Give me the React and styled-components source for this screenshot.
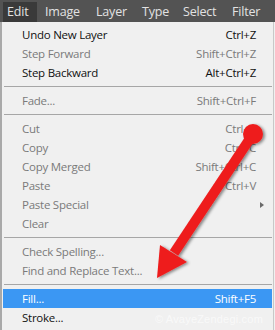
import React from "react";
import styled, { createGlobalStyle } from "styled-components";

const Global = createGlobalStyle`
  html, body { margin: 0; padding: 0; }
  body { width: 275px; height: 330px; overflow: hidden; background: #f0f0f0; font-family: "Open Sans", "Noto Sans", sans-serif; }
`;

const Screen = styled.div`
  position: relative;
  width: 275px;
  height: 330px;
  overflow: hidden;
  display: flex;
  flex-direction: column;
`;

const MenuBar = styled.div`
  height: 22px;
  background: #535353;
  display: flex;
  align-items: stretch;
  padding: 2px 0 0 3px;
  box-sizing: border-box;
`;

const MenuTitle = styled.div`
  display: flex;
  align-items: center;
  flex: none;
  width: ${(p) => p.$w}px;
  box-sizing: border-box;
  padding-left: 4px;
  margin-right: ${(p) => p.$mr || 0}px;
  background: ${(p) => (p.$active ? "#3a3a3a" : "transparent")};
  color: #e2e2e2;
  font-size: 12.5px;
  letter-spacing: -0.2px;
  line-height: 20px;
  white-space: nowrap;
`;

const Dropdown = styled.div`
  flex: 1;
  background: #f0f0f0;
  border-left: 2px solid #a9a9a9;
  border-right: 1px solid #c8c8c8;
  margin-right: 1px;
  padding-top: 3px;
  display: flex;
  flex-direction: column;
`;

const Item = styled.div`
  height: 19px;
  display: flex;
  align-items: center;
  padding: 0 16px 0 19px;
  margin: 0 1px;
  font-size: 11.5px;
  letter-spacing: -0.25px;
  color: ${(p) => (p.$selected ? "#ffffff" : p.$disabled ? "#7a7a7a" : "#111111")};
  background: ${(p) => (p.$selected ? "#3b97f3" : "transparent")};
`;

const Label = styled.span`
  flex: 1;
  white-space: nowrap;
`;

const Shortcut = styled.span`
  white-space: nowrap;
`;

const SubArrow = styled.span`
  width: 0;
  height: 0;
  border-top: 3.5px solid transparent;
  border-bottom: 3.5px solid transparent;
  border-left: 4px solid #6a6a6a;
  margin-right: -8px;
`;

const Separator = styled.div`
  height: 9px;
  display: flex;
  align-items: center;
  padding: 0 1px 0 2px;
  &::after {
    content: "";
    flex: 1;
    height: 1px;
    background: #a6a6a6;
  }
`;

const Overlay = styled.svg`
  position: absolute;
  left: 0;
  top: 0;
  pointer-events: none;
`;

const Watermark = styled.div`
  position: absolute;
  right: 12px;
  bottom: 5px;
  font-family: "Liberation Sans", sans-serif;
  font-size: 11px;
  color: rgba(255, 255, 255, 0.6);
  letter-spacing: 0.2px;
`;

const titles = [
  { t: "Edit", w: 34, mr: 4, active: true },
  { t: "Image", w: 51 },
  { t: "Layer", w: 46 },
  { t: "Type", w: 41 },
  { t: "Select", w: 49 },
  { t: "Filter", w: 44 },
];

const groups = [
  [
    { label: "Undo New Layer", key: "Ctrl+Z" },
    { label: "Step Forward", key: "Shift+Ctrl+Z", disabled: true },
    { label: "Step Backward", key: "Alt+Ctrl+Z" },
  ],
  [{ label: "Fade...", key: "Shift+Ctrl+F", disabled: true }],
  [
    { label: "Cut", key: "Ctrl+X", disabled: true },
    { label: "Copy", key: "Ctrl+C", disabled: true },
    { label: "Copy Merged", key: "Shift+Ctrl+C", disabled: true },
    { label: "Paste", key: "Ctrl+V", disabled: true },
    { label: "Paste Special", sub: true, disabled: true },
    { label: "Clear", disabled: true },
  ],
  [
    { label: "Check Spelling...", disabled: true },
    { label: "Find and Replace Text...", disabled: true },
  ],
  [
    { label: "Fill...", key: "Shift+F5", selected: true },
    { label: "Stroke..." },
  ],
];

export default function App() {
  return (
    <>
      <Global />
      <Screen>
        <MenuBar>
          {titles.map((t) => (
            <MenuTitle key={t.t} $w={t.w} $mr={t.mr} $active={t.active}>
              {t.t}
            </MenuTitle>
          ))}
        </MenuBar>
        <Dropdown>
          {groups.map((g, gi) => (
            <React.Fragment key={gi}>
              {gi > 0 && <Separator />}
              {g.map((it) => (
                <Item key={it.label} $disabled={it.disabled} $selected={it.selected}>
                  <Label>{it.label}</Label>
                  {it.key && <Shortcut>{it.key}</Shortcut>}
                  {it.sub && <SubArrow />}
                </Item>
              ))}
            </React.Fragment>
          ))}
        </Dropdown>
        <Overlay width="275" height="330" viewBox="0 0 275 330">
          <defs>
            <filter id="sh" x="-20%" y="-20%" width="140%" height="140%">
              <feDropShadow dx="2" dy="1" stdDeviation="1.5" floodColor="#000" floodOpacity="0.45" />
            </filter>
          </defs>
          <g filter="url(#sh)" fill="#ee1c1c">
            <circle cx="253" cy="134" r="10" />
            <line x1="253" y1="134" x2="174" y2="253" stroke="#ee1c1c" strokeWidth="10" />
            <polygon points="157,278 160,245 187,262" />
          </g>
        </Overlay>
        <Watermark>© AvayeZendegi.com</Watermark>
      </Screen>
    </>
  );
}
